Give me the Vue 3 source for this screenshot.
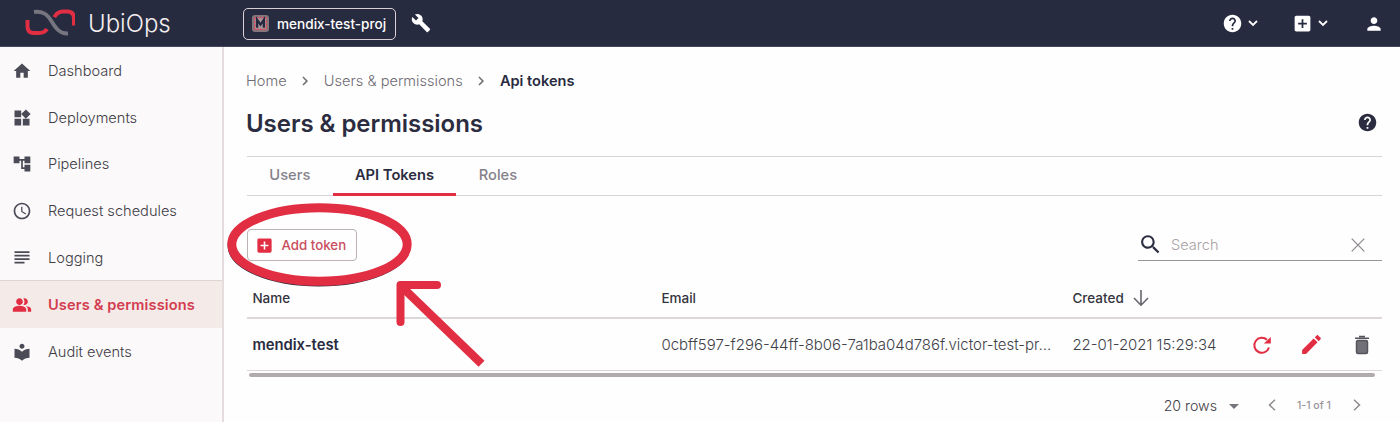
<script setup>
const icons = {
  home: 'M10 20v-6h4v6h5v-8h3L12 3 2 12h3v8z',
  widgets: 'M13 13v8h8v-8h-8zM3 21h8v-8H3v8zM3 3v8h8V3H3zm13.66-1.31L11 7.34 16.66 13l5.66-5.66-5.66-5.65z',
  tree: 'M22 11V3h-7v3H9V3H2v8h7V8h2v10h4v3h7v-8h-7v3h-2V8h2v3z',
  clock: 'M11.99 2C6.47 2 2 6.48 2 12s4.47 10 9.99 10C17.52 22 22 17.52 22 12S17.52 2 11.99 2zM12 20c-4.42 0-8-3.58-8-8s3.58-8 8-8 8 3.58 8 8-3.58 8-8 8zm.5-13H11v6l5.25 3.15.75-1.23-4.5-2.67z',
  lines: 'M3 4h18v2H3zM3 8.2h18v2H3zM3 12.4h18v2H3zM3 16.6h12v2H3z',
  people: 'M16.67 13.13C18.04 14.06 19 15.32 19 17v3h4v-3c0-2.18-3.57-3.47-6.33-3.87zM15 12c2.21 0 4-1.79 4-4s-1.79-4-4-4c-.47 0-.91.1-1.33.24C14.5 5.27 15 6.58 15 8s-.5 2.73-1.33 3.76c.42.14.86.24 1.33.24zM9 12c2.21 0 4-1.79 4-4s-1.79-4-4-4-4 1.79-4 4 1.79 4 4 4zm0 1c-2.67 0-8 1.34-8 4v3h16v-3c0-2.66-5.33-4-8-4z',
  reader: 'M12 11.55C9.64 9.35 6.48 8 3 8v11c3.48 0 6.64 1.35 9 3.55 2.36-2.19 5.52-3.55 9-3.55V8c-3.48 0-6.64 1.35-9 3.55zM12 8c1.66 0 3-1.34 3-3s-1.34-3-3-3-3 1.34-3 3 1.34 3 3 3z',
  wrench: 'M22.7 19l-9.1-9.1c.9-2.3.4-5-1.5-6.9-2-2-5-2.4-7.4-1.3L9 6 6 9 1.6 4.7C.4 7.1.9 10.1 2.9 12.1c1.9 1.9 4.6 2.4 6.9 1.5l9.1 9.1c.4.4 1 .4 1.4 0l2.3-2.3c.5-.4.5-1.1.1-1.4z',
  help: 'M12 2C6.48 2 2 6.48 2 12s4.48 10 10 10 10-4.48 10-10S17.52 2 12 2zm1 17h-2v-2h2v2zm2.07-7.75l-.9.92C13.45 12.9 13 13.5 13 15h-2v-.5c0-1.1.45-2.1 1.17-2.83l1.24-1.26c.37-.36.59-.86.59-1.41 0-1.1-.9-2-2-2s-2 .9-2 2H8c0-2.21 1.79-4 4-4s4 1.79 4 4c0 .88-.36 1.68-.93 2.25z',
  plus: 'M19 3H5c-1.1 0-2 .9-2 2v14c0 1.1.9 2 2 2h14c1.1 0 2-.9 2-2V5c0-1.1-.9-2-2-2zm-2 10h-4v4h-2v-4H7v-2h4V7h2v4h4v2z',
  person: 'M12 12c2.21 0 4-1.79 4-4s-1.79-4-4-4-4 1.79-4 4 1.79 4 4 4zm0 2c-2.67 0-8 1.34-8 4v2h16v-2c0-2.66-5.33-4-8-4z',
  search: 'M15.5 14h-.79l-.28-.27C15.41 12.59 16 11.11 16 9.5 16 5.91 13.09 3 9.5 3S3 5.91 3 9.5 5.91 16 9.5 16c1.61 0 3.09-.59 4.23-1.57l.27.28v.79l5 4.99L20.49 19l-4.99-5zm-6 0C7.01 14 5 11.99 5 9.5S7.01 5 9.5 5 14 7.01 14 9.5 11.99 14 9.5 14z',
  pencil: 'M3 17.25V21h3.75L17.81 9.94l-3.75-3.75L3 17.25zM20.71 7.04c.39-.39.39-1.02 0-1.41l-2.34-2.34c-.39-.39-1.02-.39-1.41 0l-1.83 1.83 3.75 3.75 1.83-1.83z',
  chevron: 'M8.59 16.59L13.17 12 8.59 7.41 10 6l6 6-6 6z',
}
const nav = [
  ['home', 'Dashboard'],
  ['widgets', 'Deployments'],
  ['tree', 'Pipelines'],
  ['clock', 'Request schedules'],
  ['lines', 'Logging'],
  ['people', 'Users & permissions'],
  ['reader', 'Audit events'],
]
</script>

<template>
  <div class="page">
    <header class="topbar">
      <svg class="logo" viewBox="0 0 50 28">
        <path class="grey" d="M9 4C19 2.500 23 7.500 27 14s8 12 16 11.500" />
        <path class="red" d="M2.500 12v6.500q0 6.500 6.500 6.500h5q5.500 0 8-4M29.300 9.200q3-5.700 8.700-5.700h4q7 0 7 7V17.500" />
      </svg>
      <span class="brand">UbiOps</span>
      <div class="project">
        <svg class="mark" viewBox="0 0 16 16">
          <rect width="16" height="16" rx="3" fill="#85767d" />
          <rect x="2.500" y="2.500" width="11" height="11" rx="1" fill="#a9959b" stroke="#e04558" stroke-width="1.200" stroke-dasharray="2 1" />
          <path d="M4.800 12V4.500L8 9l3.200-4.500V12" fill="none" stroke="#262a40" stroke-width="2.200" />
        </svg>
        <span>mendix-test-proj</span>
      </div>
      <svg class="wrench" viewBox="0 0 24 24"><path :d="icons.wrench" /></svg>
      <div class="actions">
        <svg class="i21" viewBox="0 0 24 24"><path :d="icons.help" /></svg>
        <svg class="caret" viewBox="0 0 10 7"><path d="M1 1l4 4 4-4" /></svg>
        <svg class="i21 add" viewBox="0 0 24 24"><path :d="icons.plus" /></svg>
        <svg class="caret" viewBox="0 0 10 7"><path d="M1 1l4 4 4-4" /></svg>
        <svg class="i21 user" viewBox="0 0 24 24"><path :d="icons.person" /></svg>
      </div>
    </header>
    <div class="body">
      <nav class="side">
        <a v-for="[icon, label] in nav" :key="label" class="item" :class="{ active: icon === 'people' }">
          <svg viewBox="0 0 24 24"><path :d="icons[icon]" /></svg>
          <span>{{ label }}</span>
        </a>
      </nav>
      <main>
        <div class="crumbs">
          <span>Home</span>
          <svg viewBox="0 0 24 24"><path :d="icons.chevron" /></svg>
          <span>Users &amp; permissions</span>
          <svg viewBox="0 0 24 24"><path :d="icons.chevron" /></svg>
          <b>Api tokens</b>
        </div>
        <div class="title">
          <h1>Users &amp; permissions</h1>
          <svg viewBox="0 0 24 24"><path :d="icons.help" /></svg>
        </div>
        <div class="tabs">
          <span class="tab">Users</span>
          <span class="tab on">API Tokens</span>
          <span class="tab">Roles</span>
        </div>
        <div class="tools">
          <button>
            <svg viewBox="0 0 24 24"><path :d="icons.plus" /></svg>
            <span>Add token</span>
          </button>
          <div class="search">
            <svg class="glass" viewBox="0 0 24 24"><path :d="icons.search" /></svg>
            <span>Search</span>
            <svg class="clear" viewBox="0 0 14 14"><path d="M.7.7l12.600 12.600M13.300.7L.7 13.300" /></svg>
          </div>
        </div>
        <div class="row head">
          <span class="name">Name</span>
          <span>Email</span>
          <span class="created">Created
            <svg viewBox="0 0 16 18"><path d="M8 1v15M1 9l7 7.200L15 9" /></svg>
          </span>
        </div>
        <div class="row data">
          <span class="name">mendix-test</span>
          <span class="mail">0cbff597-f296-44ff-8b06-7a1ba04d786f.victor-test-pr...</span>
          <span class="date">22-01-2021 15:29:34</span>
          <span class="ops">
            <svg class="reload" viewBox="0 0 20 20">
              <path d="M17 12.500A7.500 7.500 0 1 1 15 4.800" />
              <path class="tip" d="M18.800 2v6.500h-7z" />
            </svg>
            <svg class="pencil" viewBox="0 0 24 24"><path :d="icons.pencil" /></svg>
            <svg class="trash" viewBox="0 0 16 20">
              <path d="M1 3.200h14M5 1.600h6" />
              <rect x="2.500" y="5.600" width="11" height="12.900" rx="1.500" />
            </svg>
          </span>
        </div>
        <div class="scroll"></div>
        <div class="pager">
          <span class="rows">20 rows</span>
          <i class="drop"></i>
          <svg viewBox="0 0 8 12"><path d="M7 .8L1.500 6 7 11.200" /></svg>
          <span class="count">1-1 of 1</span>
          <svg viewBox="0 0 8 12"><path d="M1 .8L6.500 6 1 11.200" /></svg>
        </div>
      </main>
    </div>
    <svg class="callout" viewBox="0 0 270 180">
      <ellipse class="shade" cx="99" cy="45.500" rx="88" ry="37.500" />
      <ellipse cx="99.500" cy="44.500" rx="87.700" ry="36.800" />
      <path class="shaft" d="M182 87l79.500 76.800" />
      <path class="tip" d="M217 85h-36.500v37" />
    </svg>
  </div>
</template>

<style>
body { margin: 0; background: #fefefe; }
</style>

<style scoped>
.page { position: relative; width: 1400px; height: 422px; overflow: hidden; font-family: Inter, sans-serif; color: #403d47; background: #fefefe; font-size: 14.6px; }
svg { display: block; flex: none; fill: currentColor; }
span, b { white-space: nowrap; }
.topbar { display: flex; align-items: center; height: 47px; box-sizing: border-box; padding-right: 16px; background: #272b40; border-bottom: 1px solid #45465a; color: #fff; }
.logo { width: 50px; height: 28px; margin: -2px 0 0 25px; stroke-width: 3.900; }
.logo path { fill: none; }
.grey { stroke: #77757f; }
.red { stroke: #e22e43; }
.brand { width: 82px; margin: 1px 0 0 13px; font-size: 24px; font-weight: 300; color: #f3edef; }
.project { display: flex; align-items: center; box-sizing: border-box; width: 153px; height: 32px; margin: 1px 0 0 73px; padding-left: 8px; border: 1px solid #d9d0d3; border-radius: 5px; font-size: 13.600px; font-weight: 500; }
.mark { width: 17px; height: 17px; margin-right: 8px; }
.wrench { width: 20px; height: 20px; margin-left: 15px; }
.actions { display: flex; align-items: center; margin-left: auto; margin-top: 1px; }
.i21 { width: 21px; height: 21px; }
.caret { width: 10px; height: 7px; margin-left: 5px; fill: none; stroke: #fff; stroke-width: 1.800; }
.add { margin-left: 34px; }
.user { margin-left: 36px; width: 20px; height: 20px; }
.body { display: flex; height: 375px; }
.side { width: 222px; flex: none; background: #fbf9f9; border-right: 2px solid #e5dddd; }
.item { display: flex; align-items: center; height: 46.800px; box-sizing: border-box; padding: 1px 0 0 12px; font-weight: 300; }
.item svg { width: 20px; height: 20px; margin-right: 16px; color: #4b4b57; }
.active { background: #f4eae8; color: #d33c4f; font-weight: 600; letter-spacing: .13px; box-shadow: 0 -1px #ddd5d5; }
.active svg { color: #e22e43; }
main { width: 1135px; padding-left: 23px; }
.crumbs { display: flex; align-items: center; height: 20px; margin: 24px 0 0 -1px; color: #6f6b72; font-weight: 300; }
.crumbs svg { width: 18px; height: 18px; margin: 0 9.600px; }
.crumbs b { color: #292b40; font-weight: 600; }
.title { display: flex; align-items: center; justify-content: space-between; height: 30px; margin-top: 17px; color: #2b2c40; }
h1 { margin: 0 0 0 -1px; font-size: 24px; font-weight: 600; letter-spacing: -.04px; }
.title svg { width: 21px; height: 21px; margin-right: 4px; margin-top: -2px; }
.tabs { display: flex; box-sizing: border-box; height: 40px; margin-top: 18px; border: solid #d9d3d5; border-width: 1px 0; font-size: 14.700px; }
.tab { box-sizing: border-box; height: 39px; padding: 0 22.300px; line-height: 36px; font-weight: 500; color: #85818a; }
.on { color: #2b2c40; font-weight: 600; border-bottom: 3px solid #e22e43; }
.tools { display: flex; align-items: center; justify-content: space-between; height: 32px; margin-top: 33px; }
button { display: flex; align-items: center; width: 110px; height: 32px; box-sizing: border-box; padding: 0 0 0 7px; border: 1px solid #bcb3b6; border-radius: 4px; background: #fefefe; color: #c94f5e; font: 500 13.300px Inter, sans-serif; }
button svg { width: 19px; height: 19px; margin-right: 7.500px; color: #e22e43; }
.search { display: flex; align-items: center; box-sizing: border-box; width: 244px; height: 32px; border-bottom: 1px solid #99929a; color: #aaa3a7; font-weight: 300; }
.glass { width: 25px; height: 25px; margin-right: 8px; color: #2b2c40; }
.clear { width: 14px; height: 14px; margin: 1px 17px 0 auto; fill: none; stroke: #8c878c; stroke-width: 1.200; }
.row { display: grid; grid-template-columns: 409px 411px 180px 1fr; align-items: center; box-sizing: border-box; padding-left: 5.400px; }
.head { height: 58px; border-bottom: 2px solid #ddd7d9; font-size: 13.500px; font-weight: 500; color: #34343f; padding-top: 18px; }
.created { display: flex; align-items: center; gap: 9px; }
.created svg { width: 16px; height: 18px; fill: none; stroke: #67646d; stroke-width: 1.600; }
.data { height: 52px; border-bottom: 1px solid #ddd7d9; font-size: 14.960px; font-weight: 300; color: #403e48; }
.data .name { font-size: 14.800px; font-weight: 600; color: #292b40; }
.ops { display: flex; align-items: center; }
.reload { width: 20px; height: 20px; fill: none; stroke: #e22e43; stroke-width: 2; }
.reload .tip { fill: #e22e43; stroke: none; }
.pencil { width: 25px; height: 25px; margin-left: 27px; color: #e22e43; }
.trash { width: 16px; height: 20px; margin-left: 30px; fill: #717077; stroke: #55535b; stroke-width: 1.500; }
.scroll { width: 1126px; height: 4px; margin: 2px 0 0 2px; background: #b2abad; border-radius: 2px; }
.pager { display: flex; align-items: center; height: 20px; margin: 18px 21px 0 0; justify-content: flex-end; font-weight: 300; }
.rows { font-size: 14.200px; }
.drop { border: 5px solid transparent; border-top-color: #77747b; border-bottom: 0; margin: 2px 29px 0 12px; }
.pager svg { width: 8px; height: 12px; fill: none; stroke: #918b90; stroke-width: 1.500; }
.count { width: 36px; margin: 0 20px 0 21px; font-size: 10.500px; font-weight: 500; color: #99939a; }
.callout { position: absolute; left: 220px; top: 200px; width: 270px; height: 180px; fill: none; stroke: #e22e43; stroke-width: 9; pointer-events: none; }
.callout .shade { stroke: #30293d; stroke-width: 7; }
.callout .shaft { stroke-width: 8.500; }
.callout .tip { stroke-width: 8; stroke-linecap: round; stroke-linejoin: round; }
</style>
